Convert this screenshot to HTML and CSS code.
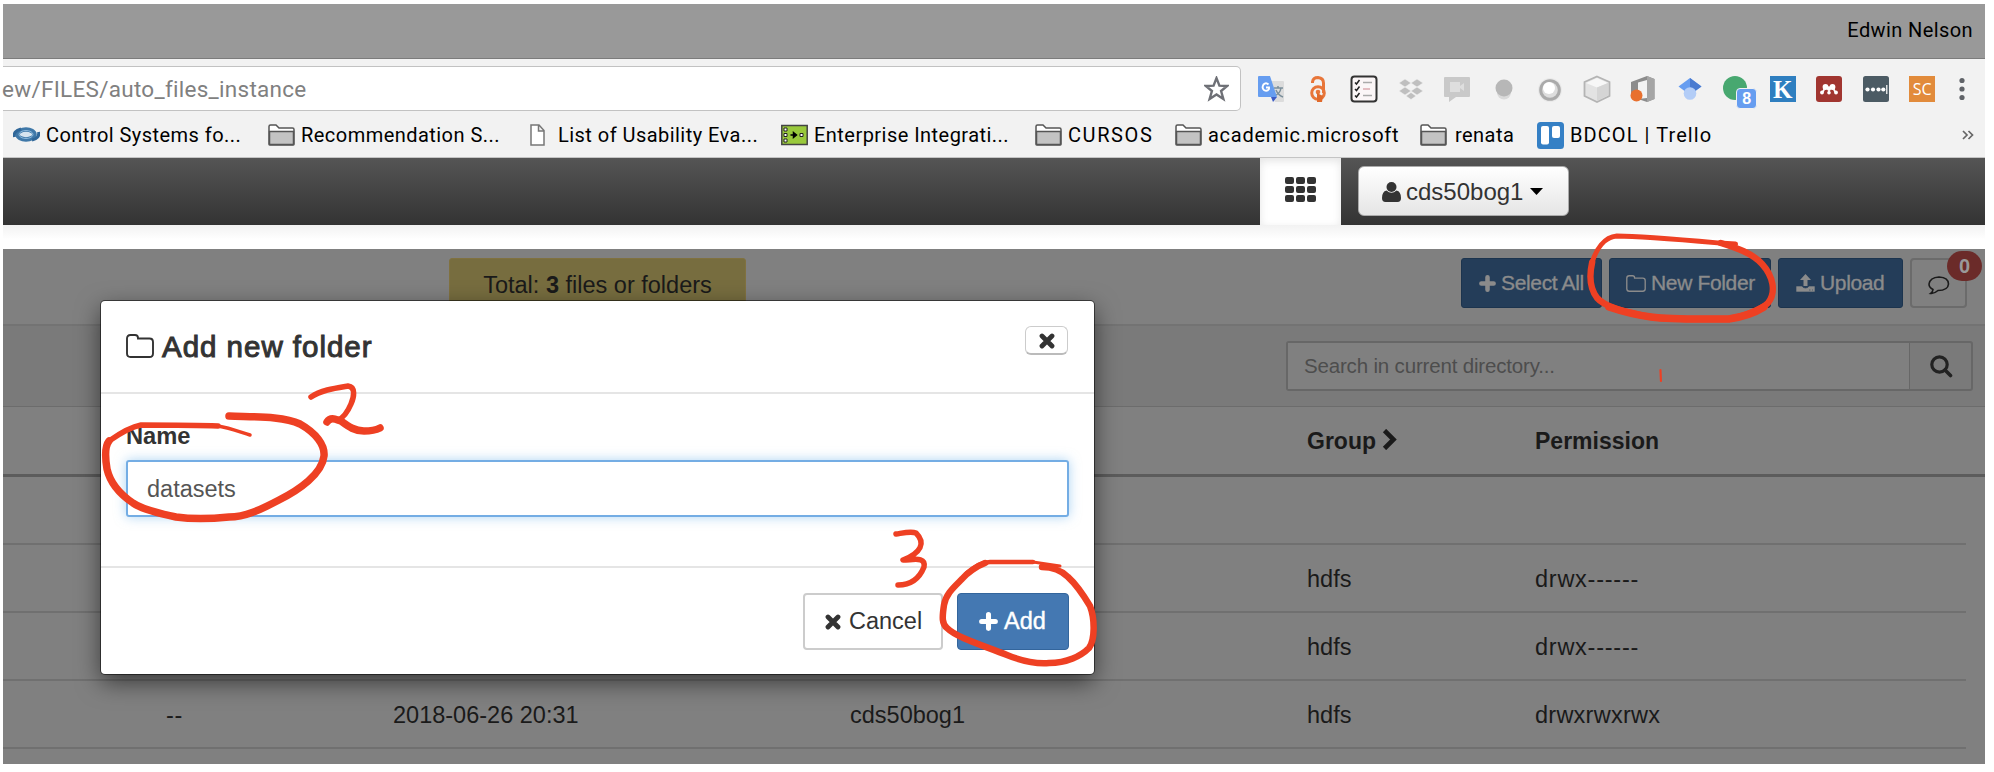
FILE: index.html
```html
<!DOCTYPE html>
<html lang="en">
<head>
<meta charset="utf-8">
<title>Files</title>
<link rel="stylesheet" href="styles.css">
</head>
<body>
<svg class="defs" width="0" height="0">
  <symbol id="bm-folder" viewBox="0 0 27 22">
    <path d="M1 20V2.500Q1 1 2.500 1H8L11 4H24.500Q26 4 26 5.500V20Q26 21 25 21H2Q1 21 1 20Z" fill="#fff" stroke="#555" stroke-width="1.500"/>
    <path d="M1.500 7.500H25.500V20.500H1.500Z" fill="#c3c3c3" stroke="#555" stroke-width="1.500"/>
  </symbol>
  <symbol id="folder-o" viewBox="0 0 28 24">
    <path d="M1 19.500V4.500Q1 1 4.500 1H9Q12 1 12 4V4.500H23.500Q27 4.500 27 8V19.500Q27 23 23.500 23H4.500Q1 23 1 19.500Z" fill="none" stroke="currentColor" stroke-width="1.900"/>
  </symbol>
  <symbol id="times" viewBox="0 0 16 16">
    <path d="M3 3L13 13M13 3L3 13" stroke="currentColor" stroke-width="4.800" stroke-linecap="round" fill="none"/>
  </symbol>
  <symbol id="plus" viewBox="0 0 18 18">
    <path d="M9 2.500V15.500M2.500 9H15.500" stroke="currentColor" stroke-width="4.800" stroke-linecap="round" fill="none"/>
  </symbol>
</svg>

<div class="frame">
  <div class="titlebar"><span class="profile">Edwin Nelson</span></div>

  <div class="toolbar">
    <div class="urlbar">
      <span class="url">ew/FILES/auto_files_instance</span>
      <svg class="star" viewBox="0 0 24 25"><path d="M12 2L14.800 9.300L22.300 9.600L16.400 14.400L18.600 22L12 17.700L5.400 22L7.600 14.400L1.700 9.600L9.200 9.300Z" fill="none" stroke="#6e7076" stroke-width="2.300"/></svg>
    </div>
    <div class="extensions">
      <svg viewBox="0 0 28 28"><path d="M10 6H26Q27 6 27 7V26Q27 27 26 27H18Z" fill="#dcdcdc"/><path d="M17 13H26M21 11V13M24 13Q23 19 17 21M19 15Q21 20 26 22" stroke="#7b8f9b" stroke-width="1.500" fill="none"/><path d="M2 1H13L20 22H2Q1 22 1 21V2Q1 1 2 1Z" fill="#669df0"/><path d="M14 22H20L16 27Z" fill="#3c5bc4"/><path d="M11.500 9.500Q9 7 6.500 9.500Q4.500 13 7 15Q10 17 12 14V12.500H9" stroke="#fff" stroke-width="1.900" fill="none"/></svg>
      <svg viewBox="0 0 28 28"><g fill="none" stroke="#e8763a" stroke-width="3"><path d="M8.500 8V7Q9 2.500 14 2.500Q19.500 3 19.500 8V18"/><circle cx="14" cy="18" r="6.300"/></g><circle cx="14" cy="17" r="2.300" fill="#e8763a"/><path d="M13 18V27H18L19 21Z" fill="#e06a2c"/></svg>
      <svg viewBox="0 0 28 28"><rect x="1.500" y="1.500" width="25" height="25" rx="3" fill="#fbf6f7" stroke="#333" stroke-width="2"/><path d="M5 7.500l1.500 1.500 3-4M5 14l1.500 1.500 3-4M5 20.500l1.500 1.500 3-4" fill="none" stroke="#222" stroke-width="1.500"/><path d="M13 7.500H22M13 20.500H22" stroke="#aaa" stroke-width="1.500"/><path d="M13 14H20" stroke="#dcaab0" stroke-width="1.500"/></svg>
      <svg viewBox="0 0 28 28"><path d="M8 4L14 8L8 12L2 8ZM20 4L26 8L20 12L14 8ZM8 12L14 16L8 20L2 16ZM20 12L26 16L20 20L14 16ZM14 17.500L19 21L14 24.500L9 21Z" fill="#bfbfbf" stroke="#f2f2f2" stroke-width=".5"/></svg>
      <svg viewBox="0 0 28 28"><path d="M2 2H26Q27 2 27 3V21Q27 22 26 22H13L6 27V22H2Q1 22 1 21V3Q1 2 2 2Z" fill="#c9c9c9"/><path d="M7 7H17V11L21 8V16L17 13V17H7Z" fill="#dedede"/></svg>
      <svg viewBox="0 0 28 28"><circle cx="14" cy="17.500" r="7" fill="#dadada"/><circle cx="14" cy="13" r="8.500" fill="#b7b7b7"/></svg>
      <svg viewBox="0 0 28 28"><circle cx="14" cy="15" r="12" fill="#e9e9e9"/><circle cx="14" cy="15" r="10.800" fill="#aaa"/><circle cx="14" cy="15" r="7.800" fill="#ddd"/><circle cx="13" cy="13" r="6" fill="#fff"/></svg>
      <svg viewBox="0 0 28 28"><path d="M14 1.500L26.500 7V21L14 27L1.500 21V7Z" fill="#e3e3e3" stroke="#b4b4b4" stroke-width="1.800"/><path d="M3 8L14 12.500L25 8L14 3Z" fill="#f7f7f7"/><path d="M14 12.500V26L25 20.500V8Z" fill="#d5d5d5"/></svg>
      <svg viewBox="0 0 28 28"><path d="M2 7L18 1L25.500 4V24L18 27L9 24L18 23V5L9 7.500V18L2 20Z" fill="#8c8c8c"/><path d="M18 1L25.500 4V24L18 27Z" fill="#a5a5a5"/><circle cx="7.500" cy="20.500" r="6" fill="#e8702e"/></svg>
      <svg viewBox="0 0 28 28"><path d="M14 3L25.500 11.500L14 20L2.500 11.500Z" fill="#669df0"/><path d="M14 3L25.500 11.500L17 17.500L14 12Z" fill="#4a7bd0"/><circle cx="14" cy="18.500" r="6.300" fill="#b3cdf7"/></svg>
      <span class="ext-badged"><svg viewBox="0 0 28 28"><circle cx="13" cy="13" r="12" fill="#48a870"/></svg><b class="ext-count">8</b></span>
      <span class="tile tile-k">K</span>
      <svg viewBox="0 0 28 28"><rect x="1" y="1" width="26" height="26" rx="3" fill="#a13530"/><path d="M7 17Q9.500 16 9 13M14 17.500V14M21 17Q18.500 16 19 13" fill="none" stroke="#fff" stroke-width="1.500"/><g fill="#fff"><circle cx="10.500" cy="12" r="2.900"/><circle cx="17.500" cy="12" r="2.900"/><circle cx="14" cy="13.500" r="2.200"/><circle cx="7" cy="17.500" r="1.900"/><circle cx="14" cy="17.800" r="1.800"/><circle cx="21" cy="17.500" r="1.900"/></g></svg>
      <svg viewBox="0 0 28 28"><rect x="1" y="1" width="26" height="26" rx="2.500" fill="#4c5b64"/><g fill="#fff"><circle cx="5.500" cy="14.500" r="2.100"/><circle cx="11" cy="14.500" r="2.100"/><circle cx="16.500" cy="14.500" r="2.100"/><circle cx="21.300" cy="14.500" r="2.100"/><rect x="24.200" y="10" width="1.200" height="9"/></g></svg>
      <span class="tile tile-sc">SC</span>
      <svg class="menu" viewBox="0 0 6 28"><g fill="#606368"><circle cx="3" cy="5.500" r="2.600"/><circle cx="3" cy="14" r="2.600"/><circle cx="3" cy="22.500" r="2.600"/></g></svg>
    </div>
  </div>

  <div class="bookmarks">
    <div class="bm bm-1"><svg viewBox="0 0 27 22"><ellipse cx="13" cy="10.500" rx="8.500" ry="5" fill="#d6e4ef" stroke="#3f78a8" stroke-width="4.500"/><path d="M1.500 13Q0 7 8 5M25.500 8Q27 14 19 16" fill="none" stroke="#2f6698" stroke-width="3"/><ellipse cx="13" cy="10.500" rx="7" ry="4" fill="none" stroke="#8bb8dc" stroke-width="1"/></svg><span>Control Systems fo...</span></div>
    <div class="bm bm-2"><svg><use href="#bm-folder"/></svg><span>Recommendation S...</span></div>
    <div class="bm bm-3"><svg viewBox="0 0 27 22"><path d="M5 1H13L18 6.500V21H5ZM12.500 1V7H18" fill="#fff" stroke="#777" stroke-width="1.500"/></svg><span>List of Usability Eva...</span></div>
    <div class="bm bm-4"><svg viewBox="0 0 27 22"><rect x=".8" y="1.500" width="25.400" height="19" fill="#99c93c" stroke="#444" stroke-width="1.500"/><path d="M3 4h3v3h-3zM3 9.500h3v3h-3zM3 15h3v3h-3zM19 9.500h3v3h-3z" fill="#fff" stroke="#222" stroke-width="1"/><path d="M9.500 11H13M12.500 8.500L15.500 11L12.500 13.500Z" stroke="#000" stroke-width="1.500"/></svg><span>Enterprise Integrati...</span></div>
    <div class="bm bm-5"><svg><use href="#bm-folder"/></svg><span>CURSOS</span></div>
    <div class="bm bm-6"><svg><use href="#bm-folder"/></svg><span>academic.microsoft</span></div>
    <div class="bm bm-7"><svg><use href="#bm-folder"/></svg><span>renata</span></div>
    <div class="bm bm-8"><svg class="trello" viewBox="0 0 27 27"><rect width="27" height="27" rx="3.500" fill="#3580c5"/><rect x="4" y="4" width="8" height="18.500" rx="2" fill="#fff"/><rect x="15" y="4" width="8" height="12" rx="2" fill="#fff"/></svg><span>BDCOL | Trello</span></div>
    <svg class="more" viewBox="0 0 12 10"><path d="M1 1L5 5L1 9M6.500 1L10.500 5L6.500 9" fill="none" stroke="#666" stroke-width="1.700"/></svg>
  </div>

  <header class="navbar">
    <div class="apps-tab">
      <svg viewBox="0 0 31 25"><g fill="#333"><rect width="9" height="7" rx="2"/><rect x="11" width="9" height="7" rx="2"/><rect x="22" width="9" height="7" rx="2"/><rect y="9" width="9" height="7" rx="2"/><rect x="11" y="9" width="9" height="7" rx="2"/><rect x="22" y="9" width="9" height="7" rx="2"/><rect y="18" width="9" height="7" rx="2"/><rect x="11" y="18" width="9" height="7" rx="2"/><rect x="22" y="18" width="9" height="7" rx="2"/></g></svg>
    </div>
    <div class="user-button">
      <svg class="user-icon" viewBox="0 0 19 20"><circle cx="9.500" cy="5" r="5" fill="#333"/><path d="M4.500 8.500Q9.500 13 14.500 8.500Q19 9.500 19 16Q19 20 15.500 20H3.500Q0 20 0 16Q0 9.500 4.500 8.500Z" fill="#333"/></svg>
      <span>cds50bog1</span>
      <svg class="caret" viewBox="0 0 13 7"><path d="M0 0H13L6.500 7Z"/></svg>
    </div>
  </header>
  <div class="spacer"></div>

  <main class="page">
    <section class="actions">
      <div class="total">Total: <b>3</b> files or folders</div>
      <div class="buttons">
        <div class="btn btn-select"><svg class="i-plus"><use href="#plus"/></svg><span>Select All</span></div>
        <div class="btn btn-new"><svg class="i-folder"><use href="#folder-o"/></svg><span>New Folder</span></div>
        <div class="btn btn-upload"><svg class="i-upload" viewBox="0 0 19 18"><path d="M9.500 0L15 6H11.500V12H7.500V6H4Z" fill="currentColor"/><path d="M0 12H6Q7 14 9.500 14Q12 14 13 12H19V18H0ZM13 16h1.500M16 16h1" fill="currentColor" stroke="#243d59" stroke-width=".6"/></svg><span>Upload</span></div>
        <div class="btn-comment"><svg viewBox="0 0 22 19"><path d="M11 1Q20.500 1.500 20.500 8Q20 14.500 10 14.500Q6 18 2.500 17.500Q5 15.500 5 13.500Q1 11.500 1 8Q2 1.500 11 1Z" fill="none" stroke="#1a1a1a" stroke-width="1.600"/></svg><b class="count">0</b></div>
      </div>
    </section>
    <section class="search">
      <div class="search-group"><div class="search-input">Search in current directory...</div><div class="search-btn"><svg viewBox="0 0 23 23"><circle cx="9.500" cy="9.500" r="7.700" fill="none" stroke="#222" stroke-width="3.200"/><path d="M15 15L20.500 20.500" stroke="#222" stroke-width="3.600" stroke-linecap="round"/></svg></div></div>
    </section>
    <div class="grid head"><b class="c4">Group <svg viewBox="0 0 15 21"><path d="M2.500 1.500L11.500 10.500L2.500 19.500" fill="none" stroke="#1a1a1a" stroke-width="4.600"/></svg></b><b class="c5 perm">Permission</b></div>
    <div class="grid row"></div>
    <div class="grid row"><span class="c4">hdfs</span><span class="c5 dashes">drwx------</span></div>
    <div class="grid row"><span class="c4">hdfs</span><span class="c5 dashes">drwx------</span></div>
    <div class="grid row"><span class="c1 dashes">--</span><span class="c2">2018-06-26 20:31</span><span class="c3">cds50bog1</span><span class="c4">hdfs</span><span class="c5 open">drwxrwxrwx</span></div>
  </main>
</div>

<div class="modal">
  <div class="modal-head">
    <svg class="title-icon"><use href="#folder-o"/></svg><span class="modal-title">Add new folder</span>
    <div class="close"><svg><use href="#times"/></svg></div>
  </div>
  <div class="modal-body">
    <b class="label">Name</b>
    <div class="field">datasets</div>
  </div>
  <div class="modal-foot">
    <div class="cancel"><svg><use href="#times"/></svg><span>Cancel</span></div>
    <div class="add"><svg><use href="#plus"/></svg><span>Add</span></div>
  </div>
</div>

<svg class="ink" viewBox="0 0 1994 772">
  <g fill="none" stroke="#ee4023" stroke-linecap="round" stroke-linejoin="round">
    <g transform="matrix(.982 0 0 1 25.920 0)">
      <path stroke-width="5" d="M1741 244L1724 243C1690 240 1645 236 1620 236C1607 237 1599 250 1595 262"/>
      <path stroke-width="6.500" d="M1595 262C1592 275 1592 288 1600 298C1608 307 1630 313 1655 317C1678 320 1712 319 1734 319C1748 317 1768 309 1774 303C1783 292 1779 276 1768 264C1758 253 1742 248 1726 243"/>
      <path stroke-width="7.500" d="M1612 307C1630 313 1640 315 1655 317C1678 320 1712 319 1734 319C1748 317 1762 312 1770 307"/>
      <path stroke-width="2.200" d="M1664.500 370L1665 381"/>
    </g>
    <path stroke-width="7.500" d="M229 416C255 417 283 416 300 424C316 433 325 445 324 456C322 474 299 490 279 500C260 510 245 517 229 517C210 519 190 519 176 517C157 513 141 509 133 503C118 493 110 482 107 469C105 457 105 446 109 441"/>
    <path stroke-width="5.500" d="M109 441C119 434 130 427 141 425C165 425 195 425 218 426"/>
    <path stroke-width="3.500" d="M218 426C230 428 240 432 250 435"/>
    <path stroke-width="5.500" d="M311 397C321 390 336 388 348 386C356 387 354 397 351 404C348 411 343 418 338 420"/>
    <path stroke-width="7.500" d="M327 422C331 416 337 420 341 421C349 427 355 431 364 431C371 431 376 430 380 428"/>
    <path stroke-width="5.500" d="M896 534C903 533 911 531 916 533C926 543 921 553 903 560C913 560 926 556 924 567C920 577 913 585 898 585"/>
    <path stroke-width="3" d="M1060 566L1033 562"/>
    <path stroke-width="4.500" d="M1033 562L990 562Q980 562 967 573"/>
    <path stroke-width="6.500" d="M985 563C977 566 967 573 962 579C953 588 946 594 944 605C942 618 942 624 947 628C957 638 985 646 1007 655C1024 662 1036 664 1049 663C1067 663 1081 656 1089 648C1095 640 1095 619 1090 606C1084 596 1078 586 1068 577C1060 569 1052 567 1042 567"/>
  </g>
</svg>
</body>
</html>
```

FILE: styles.css
```css
* { box-sizing: border-box; }
body { margin: 0; background: #fff; position: relative; width: 1994px; height: 772px; overflow: hidden; font-family: "Liberation Sans", Arial, sans-serif; color: #333; }
svg { display: block; flex: none; }
.defs { position: absolute; }
.frame { padding: 4px 9px 8px 3px; width: 1994px; height: 772px; overflow: hidden; display: flex; flex-direction: column; }

.titlebar { height: 55px; flex: none; background: #999; border-bottom: 1px solid #7c7c7c; display: flex; justify-content: flex-end; align-items: center; padding: 0 12px 3px; }
.profile { font: 20px/24px Roboto, sans-serif; color: #000; letter-spacing: .4px; }

.toolbar { height: 53px; flex: none; background: #f2f2f2; display: flex; align-items: flex-start; padding-top: 7px; }
.urlbar { width: 1238px; height: 45px; flex: none; background: #fff; border: 1px solid #c2c2c2; border-left: 0; border-radius: 0 5px 5px 0; display: flex; align-items: center; justify-content: space-between; padding-right: 11px; }
.url { font: 22.500px/28px Roboto, sans-serif; color: #808080; white-space: nowrap; letter-spacing: .28px; margin-left: -1px; }
.star { width: 25px; height: 26px; }
.extensions { height: 45px; display: flex; align-items: center; padding-left: 7px; }
.extensions > * { width: 28px; height: 28px; margin: 0 9.250px; }
.extensions > .menu { width: 6px; margin: 0 0 0 13px; }
.ext-badged { position: relative; flex: none; }
.ext-count { position: absolute; left: 14px; top: 13px; width: 21px; height: 21px; background: #669df0; border: 1px solid #f2f2f2; border-radius: 4px; color: #fff; font: bold 16px/20px "Liberation Sans", sans-serif; text-align: center; }
.tile { flex: none; border: 1px solid #f2f2f2; color: #fff; text-align: center; line-height: 27px; }
.tile-k { background: #2f7fc0; font-family: "Liberation Serif", serif; font-weight: bold; font-size: 25px; }
.tile-sc { background: #e28b3b; font-family: "Open Sans", sans-serif; font-size: 16px; }

.bookmarks { height: 46px; flex: none; background: #f2f2f2; border-bottom: 1px solid #c4c4c4; display: flex; padding-left: 10px; align-items: flex-start; }
.bm { display: flex; align-items: center; gap: 6px; height: 46px; flex: none; font: 20px/24px Roboto, sans-serif; color: #000; white-space: nowrap; }
.bm svg { width: 27px; height: 22px; }
.bm svg.trello { height: 27px; }
.bm-1 { width: 255px; } .bm-2 { width: 258px; } .bm-3 { width: 255px; } .bm-4 { width: 254px; }
.bm-5 { width: 140px; } .bm-6 { width: 245px; } .bm-7 { width: 117px; } .bm-8 { width: 413px; }
.bm span { letter-spacing: .46px; }
.bm-3 span { margin-left: -1px; }
.bm.bm-5 span { letter-spacing: 1.600px; }
.bm.bm-6 span { letter-spacing: .72px; }
.bm.bm-7 span { margin-left: 2px; }
.bm.bm-8 span { letter-spacing: 1.080px; }
.more { width: 12px; height: 10px; margin: 18px 0 0 12px; }

.navbar { height: 67px; flex: none; background: linear-gradient(#555, #333); display: flex; padding-left: 1257px; }
.apps-tab { width: 81px; background: #fff; box-shadow: inset 0 3px 8px #0000001c; padding: 19px 25px; }
.apps-tab svg { width: 31px; height: 25px; }
.user-button { margin: 8px 0 0 17px; width: 211px; height: 50px; border: 1px solid #aaa; border-radius: 6px; background: linear-gradient(#fff, #e5e5e5); display: flex; align-items: center; padding: 1px 0 0 23px; font-size: 24px; }
.user-icon { width: 19px; height: 20px; margin-right: 5px; }
.caret { width: 13px; height: 7px; margin-left: 7px; }
.spacer { height: 24px; flex: none; background: linear-gradient(#f2f2f2, #fff 60%); }

.page { flex: 1; background: #808080; color: #1a1a1a; overflow: hidden; font-size: 23.500px; }
.actions { height: 77px; border-bottom: 2px solid #737373; display: flex; justify-content: space-between; padding: 9px 18px 0 446px; }
.total { width: 297px; height: 50px; background: #776d3f; border: 1px solid #80713f; border-radius: 3px; text-align: center; line-height: 52px; white-space: nowrap; }
.buttons { display: flex; }
.btn { height: 50px; background: #243d59; border: 1px solid #1c344e; border-radius: 3px; color: #8b8b8b; display: flex; align-items: center; font-size: 21px; letter-spacing: -.35px; white-space: nowrap; -webkit-text-stroke: .35px currentColor; }
.btn-select { width: 141px; margin-right: 7px; padding-left: 17px; }
.btn-new { width: 162px; margin-right: 7px; padding-left: 16px; }
.btn-upload { width: 125px; margin-right: 7px; padding-left: 17px; }
.i-plus { width: 17px; height: 17px; margin-right: 5px; }
.i-folder { width: 20px; height: 17px; margin-right: 5px; }
.i-upload { width: 19px; height: 18px; margin-right: 5px; }
.btn-comment { width: 57px; height: 50px; border: 2px solid #6b6b6b; border-radius: 4px; padding: 16px 0 0 16px; position: relative; }
.btn-comment svg { width: 22px; height: 19px; }
.count { position: absolute; left: 35px; top: -9px; width: 35px; height: 30px; border-radius: 15px; background: #6b2b29; color: #999; font-size: 20px; line-height: 30px; text-align: center; }

.search { height: 81px; background: #7a7a7a; border-bottom: 1px solid #6c6c6c; padding: 15px 12px 0 1283px; }
.search-group { display: flex; height: 50px; width: 687px; border: 2px solid #676767; border-radius: 3px; }
.search-input { width: 622px; padding-left: 16px; background: #808080; border-right: 1px solid #676767; color: #4d4d4d; font-size: 20.500px; letter-spacing: -.17px; line-height: 45px; }
.search-btn { flex: 1; padding: 12px 0 0 20px; }
.search-btn svg { width: 23px; height: 23px; }

.grid { display: grid; grid-template-columns: 227px 457px 457px 228px 1fr; padding-left: 163px; white-space: nowrap; }
.head { height: 70px; border-bottom: 3px solid #5c5c5c; line-height: 68px; font-size: 23px; }
.row { height: 68px; margin-right: 19px; border-bottom: 2px solid #707070; line-height: 68px; }
.c1 { grid-column: 1; } .c2 { grid-column: 2; } .c3 { grid-column: 3; } .c4 { grid-column: 4; } .c5 { grid-column: 5; }
.dashes { letter-spacing: .75px; }
.open { letter-spacing: .25px; }
.head svg { display: inline-block; width: 15px; height: 21px; vertical-align: -1px; }

.modal { position: absolute; left: 101px; top: 301px; width: 993px; height: 373px; background: #fff; border-radius: 4px; box-shadow: 0 0 0 1px #00000080, 0 8px 24px #00000090; display: flex; flex-direction: column; }
.modal-head { height: 93px; border-bottom: 2px solid #e5e5e5; display: flex; align-items: flex-start; padding: 25px 26px 0 25px; }
.title-icon { width: 28px; height: 24px; margin: 8px 8px 0 0; }
.modal-title { font-size: 29.500px; letter-spacing: .98px; line-height: 42px; flex: 1; -webkit-text-stroke: 1px #333; }
.close { width: 43px; height: 29px; border: 1px solid #ccc; border-bottom: 2px solid #bbb; border-radius: 6px; display: flex; align-items: center; justify-content: center; }
.close svg { width: 16px; height: 16px; margin-top: 2px; }
.modal-body { height: 174px; border-bottom: 2px solid #e5e5e5; padding: 28px 25px 0; }
.label { display: block; font-size: 23.700px; line-height: 28px; height: 38px; }
.field { height: 57px; border: 2px solid #74ade4; border-radius: 3px; box-shadow: 0 0 12px #66afe988; color: #555; font-size: 23.500px; line-height: 55px; padding-left: 19px; }
.modal-foot { flex: 1; display: flex; justify-content: flex-end; gap: 14px; padding: 25px 25px 0 0; font-size: 23.500px; }
.cancel, .add { height: 57px; border-radius: 4px; display: flex; align-items: center; }
.cancel { width: 140px; border: 2px solid #ccc; padding-left: 20px; gap: 8px; }
.add { width: 112px; background: #4478b2; border: 1px solid #33659c; color: #fff; padding-left: 21px; gap: 6px; -webkit-text-stroke: .4px #fff; }
.cancel svg { width: 16px; height: 16px; }
.add svg { width: 19px; height: 19px; }
.ink { position: absolute; left: 0; top: 0; width: 1994px; height: 772px; }
```
